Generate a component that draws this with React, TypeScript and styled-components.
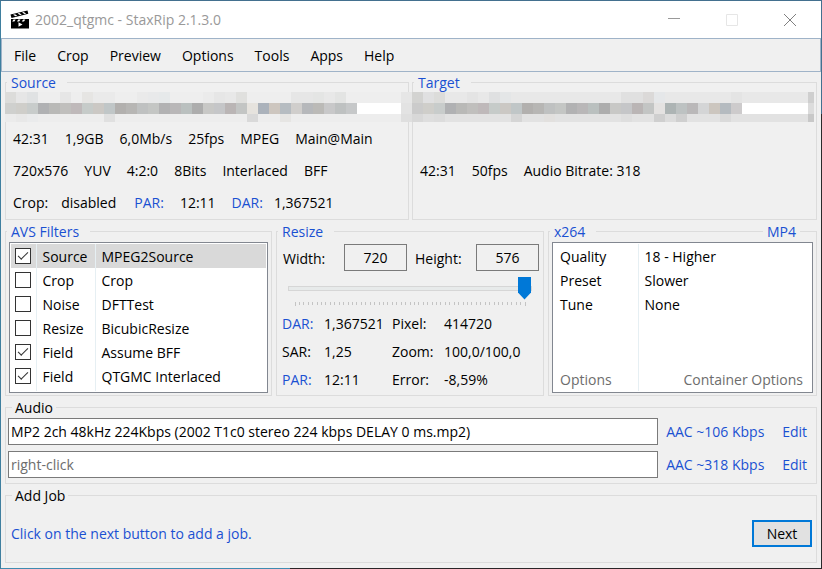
import React, { useState } from "react";
import styled, { createGlobalStyle, css } from "styled-components";

const surface = "#f0f0f0";
const blue = "#1a50d2";
const line = "#dcdcdc";

const GlobalStyle = createGlobalStyle`
  *, *::before, *::after { box-sizing: border-box; }
  body {
    margin: 0;
    background: ${surface};
    color: #000;
    font-family: "Open Sans", "Noto Sans", sans-serif;
    font-size: 14px;
    line-height: 20px;
  }
  button, input { font: inherit; color: inherit; }
`;

const Window = styled.div`
  min-height: 100vh;
  padding: 1px;
  display: flex;
  flex-direction: column;
  background:
    linear-gradient(#43708f, #43708f) top / 100% 1px no-repeat,
    linear-gradient(#3f7f9f, #3f7f9f) left / 1px 100% no-repeat,
    linear-gradient(#43708f 20%, #2a2a2c 20%) right / 1px 100% no-repeat,
    linear-gradient(90deg, #3f8bb0 290px, #2a2628 290px) bottom / 100% 1px no-repeat,
    ${surface};
`;

const TitleBar = styled.header`
  display: flex;
  align-items: center;
  height: 37px;
  padding: 0 2px 0 9px;
  background: #fff;
  color: #999;
`;

const AppIcon = styled.svg`
  width: 20px;
  height: 20px;
  margin-right: 5px;
  flex: none;
`;

const Title = styled.h1`
  margin: 0;
  flex: 1;
  font-size: 14px;
  font-weight: 400;
`;

const CaptionButton = styled.button`
  display: grid;
  place-items: center;
  width: 58px;
  height: 37px;
  padding: 0;
  border: 0;
  background: none;
`;

const MenuBar = styled.nav`
  display: flex;
  align-items: center;
  gap: 21px;
  height: 34px;
  padding: 2px 12px 0;
  border: 1px solid #9fb3c8;
`;

const MenuItem = styled.button`
  padding: 0;
  border: 0;
  background: none;
`;

const Main = styled.main`
  display: grid;
  gap: 1px;
  padding: 0 4px 5px;
`;

const Columns = styled.div<{ $template: string; $gap: number }>`
  display: grid;
  grid-template-columns: ${(p) => p.$template};
  column-gap: ${(p) => p.$gap}px;
`;

const Group = styled.fieldset`
  position: relative;
  min-width: 0;
  margin: 0;
  padding: 0;
  border: 1px solid ${line};
`;

const Legend = styled.legend<{ $link?: boolean }>`
  height: 20px;
  line-height: 22px;
  margin-left: ${(p) => (p.$link ? 1 : 6)}px;
  padding: ${(p) => (p.$link ? "0 11px 0 4px" : "0 3px")};
`;

const Link = styled.a`
  color: ${blue};
  text-decoration: none;
`;

const CornerLink = styled(Link)`
  position: absolute;
  top: -20px;
  right: 16px;
  height: 20px;
  padding: 0 4px;
  line-height: 22px;
  background: ${surface};
`;

const Mosaic = styled.svg`
  display: block;
  margin-left: -1px;
  height: 30px;
  overflow: visible;
`;

const InfoRows = styled.div`
  padding-top: 1px;
`;

const InfoRow = styled.div`
  display: flex;
  gap: 16px;
  min-height: 32px;
  padding-left: 7px;
  line-height: 32px;
  white-space: nowrap;
`;

const Pair = styled.span<{ $gap: number }>`
  display: flex;
  gap: ${(p) => p.$gap}px;
  margin-right: 2px;
`;

const ListBox = styled.div`
  display: flex;
  flex-direction: column;
  height: 151px;
  margin: 1px 3px 2px;
  padding: 1px;
  border: 1px solid #828790;
  background: #fff;
`;

const Table = styled.table`
  width: 100%;
  height: 100%;
  border-collapse: collapse;
  table-layout: fixed;
`;

const Row = styled.tr<{ $selected?: boolean }>`
  height: 24px;
  background: ${(p) => (p.$selected ? "#d9d9d9" : "transparent")};
`;

const Cell = styled.td<{ $width?: number; $divided?: boolean; $muted?: boolean; $end?: boolean }>`
  padding: 2px 6px 0;
  white-space: nowrap;
  ${(p) => p.$width && css`width: ${p.$width}px;`}
  ${(p) => p.$divided && css`border-right: 1px solid #e6eff3;`}
  ${(p) => p.$muted && css`color: #6d6d6d;`}
  ${(p) => p.$end && css`text-align: right; padding-right: 8px;`}
`;

const CheckCell = styled(Cell)`
  padding: 0 4px;
`;

const Check = styled.input`
  display: block;
  appearance: none;
  width: 16px;
  height: 16px;
  margin: 0;
  border: 1px solid #333;
  background: #fff;
  &:checked::after {
    content: "";
    display: block;
    width: 10px;
    height: 5px;
    margin: 3px 2px;
    border: solid #333;
    border-width: 0 0 1px 1px;
    transform: rotate(-45deg);
  }
`;

const SizeRow = styled.div`
  display: flex;
  align-items: center;
  padding: 3px 4px 0 6px;
`;

const SizeLabel = styled.label`
  flex: 1;
  padding-top: 2px;
`;

const SizeInput = styled.input`
  width: 63px;
  height: 27px;
  margin-right: 8px;
  padding: 0;
  border: 1px solid #7a7a7a;
  background: ${surface};
  text-align: center;
  &:last-child { margin-right: 0; }
`;

const SliderArea = styled.div`
  padding: 5px 11px 0;
`;

const Slider = styled.input`
  display: block;
  appearance: none;
  width: 100%;
  height: 24px;
  margin: 0;
  background: none;
  &::-webkit-slider-runnable-track {
    height: 5px;
    border: 1px solid #d6d6d6;
    background: #e7eaea;
  }
  &::-webkit-slider-thumb {
    appearance: none;
    width: 13px;
    height: 23px;
    margin-top: -10px;
    background: #0078d7;
    clip-path: polygon(0 0, 100% 0, 100% 70%, 50% 100%, 0 70%);
  }
`;

const Ticks = styled.svg`
  display: block;
  width: calc(100% - 14px);
  height: 4px;
  margin: 2px 7px 0;
  overflow: visible;
`;

const Stats = styled.dl`
  display: grid;
  grid-template-columns: 42px 68px 52px 1fr;
  margin: 4px 0 0;
  padding-left: 5px;
  line-height: 28px;
  white-space: nowrap;
  dt, dd { margin: 0; }
`;

const AudioGrid = styled.div`
  display: grid;
  grid-template-columns: 1fr 124px auto;
  align-items: center;
  row-gap: 6px;
  padding: 1px 9px 5px 2px;
`;

const AudioInput = styled.input`
  width: 100%;
  height: 27px;
  padding: 0 2px;
  border: 1px solid #7a7a7a;
  background: #fff;
  &::placeholder { color: #6d6d6d; opacity: 1; }
`;

const ProfileLink = styled(Link)`
  margin-left: 8px;
`;

const JobRow = styled.div`
  display: flex;
  align-items: center;
  justify-content: space-between;
  padding: 15px 4px 15px 5px;
`;

const NextButton = styled.button`
  width: 60px;
  height: 27px;
  padding: 0;
  border: 2px solid #0078d7;
  background: #e1e1e1;
`;

const pathShades =
  "cfceca c8cccb b0b1b3 b9b9b7 c0bfbd bfb9ba c6cbc9 cbc8c4 c0c6c7 b2b0ae b7b6b4 bfc1c1 c4c6c4 b2b2b3 b9b7b8 bac0bf adadad c8c8c6 c5c6c8 bab5b5 c3c5c4";

type MosaicData = {
  top: Record<number, string>;
  bottom: Record<number, string>;
  middle: string;
  topBase: string;
  bottomBase: string;
  end: [string, string, string];
  endWidth: number;
};

const sourceMosaic: MosaicData = {
  topBase: "eeeeee",
  bottomBase: "ededed",
  top: { 0: "dcdcda", 1: "e6e6e6", 2: "e0e2e3", 5: "e6e6e6", 7: "e6e5e3", 8: "eaeaea", 9: "eaeaea", 12: "eaeaea", 13: "e8e9ea", 14: "e6e9ea", 18: "ebebeb", 19: "e6e6e6", 20: "e8e8e8", 21: "e0e0de", 26: "e6e6e6", 27: "e6e6e6", 28: "e4e5e4", 29: "e8e8e8", 30: "e3e4e3" },
  bottom: { 0: "ebebeb", 1: "e8e8e8", 2: "eaebec", 9: "e0e0e0", 22: "d9d9d9", 25: "e6e5e3" },
  middle: `cfd0ce ${pathShades} e6e3de abb2bb cdc6bf b6bcc1 d0cecc b6b8bb bbbab7 c8c8c9 bec1c1 c6c8c9`,
  end: ["e6e6e6", "e3e3e3", "dfdfdf"],
  endWidth: 11,
};

const targetMosaic: MosaicData = {
  topBase: "e8e8e8",
  bottomBase: "e2e2e2",
  top: { 0: "d3d3d1", 1: "e0e0e1", 2: "dcdcda", 5: "e4e4e4", 7: "dfe0e1", 8: "e4e6e7", 19: "e0e0e0", 20: "e0e0e0", 21: "dbd9d8", 22: "e5e7e9", 29: "e4e4e4" },
  bottom: { 0: "d8d8d8", 1: "dedede", 2: "dcdcdc", 9: "d5d5d5", 12: "e2e0de", 19: "dedede", 22: "cfcfcf", 23: "dcdcdc", 24: "cfcfcf", 28: "dadada" },
  middle: `cbcbcb ${pathShades} e4e2e1 adb4b4 bdc2c2 bab8b9 d4d5d6 ccc6bf b5bbc0 cdcbcc`,
  end: ["cfcfcf", "dcdcdc", "c8c8c8"],
  endWidth: 6,
};

function PathMosaic({ data }: { data: MosaicData }) {
  const middle = data.middle.split(" ");
  const width = 396 + data.endWidth;
  return (
    <Mosaic width={width} viewBox={`0 0 ${width} 30`} shapeRendering="crispEdges" aria-hidden="true">
      <rect width="396" height="11" fill={`#${data.topBase}`} />
      <rect y="11" width="396" height="11" fill="#fff" />
      <rect y="22" width="396" height="8" fill={`#${data.bottomBase}`} />
      {Object.entries(data.top).map(([i, c]) => <rect key={`t${i}`} x={Number(i) * 11} width="11" height="11" fill={`#${c}`} />)}
      {middle.map((c, i) => <rect key={i} x={i * 11} y="11" width="11" height="11" fill={`#${c}`} />)}
      {Object.entries(data.bottom).map(([i, c]) => <rect key={`b${i}`} x={Number(i) * 11} y="22" width="11" height="8" fill={`#${c}`} />)}
      <rect x="396" width={data.endWidth} height="11" fill={`#${data.end[0]}`} />
      <rect x="396" y="11" width={data.endWidth} height="11" fill={`#${data.end[1]}`} />
      <rect x="396" y="22" width={data.endWidth} height="8" fill={`#${data.end[2]}`} />
    </Mosaic>
  );
}

const initialFilters = [
  { on: true, kind: "Source", name: "MPEG2Source" },
  { on: false, kind: "Crop", name: "Crop" },
  { on: false, kind: "Noise", name: "DFTTest" },
  { on: false, kind: "Resize", name: "BicubicResize" },
  { on: true, kind: "Field", name: "Assume BFF" },
  { on: true, kind: "Field", name: "QTGMC Interlaced" },
];

const encoder = [["Quality", "18 - Higher"], ["Preset", "Slower"], ["Tune", "None"]];
const menus = ["File", "Crop", "Preview", "Options", "Tools", "Apps", "Help"];
const tickCount = 52;

export default function App() {
  const [filters, setFilters] = useState(initialFilters);
  const toggle = (index: number) =>
    setFilters(filters.map((f, i) => (i === index ? { ...f, on: !f.on } : f)));

  return (
    <>
      <GlobalStyle />
      <Window>
        <TitleBar>
          <AppIcon viewBox="0 0 20 20" aria-hidden="true">
            <path d="M1 9h18v9.500H1z" fill="#000" />
            <path d="M.5 4.500 17.500.500l.8 3.200L1.500 8z" fill="#000" />
            <path d="m3 4.800 2.500 1.500 1.800-.5L5 4.300zm4.500-1.200L10 5.100l1.800-.4-2.500-1.600zM12 2.500l2.500 1.600 1.700-.4-2.400-1.600zM3.500 9.500h2.200L4.400 11.500H2.200zm4.800 0h2.200l-1.300 2H7zm4.800 0h2.200l-1.300 2h-2.200z" fill="#fff" />
            <path d="m8.500 12.300 4 2.200-4 2.300z" fill="#fff" />
          </AppIcon>
          <Title>2002_qtgmc - StaxRip 2.1.3.0</Title>
          <CaptionButton aria-label="Minimize">
            <svg width="12" height="12" stroke="#999"><path d="M0 4.500h12" /></svg>
          </CaptionButton>
          <CaptionButton aria-label="Maximize" disabled>
            <svg width="12" height="12" stroke="#e6e6e6" fill="none"><path d="M.5.5h11v11H.5z" /></svg>
          </CaptionButton>
          <CaptionButton aria-label="Close">
            <svg width="12" height="12" stroke="#808080"><path d="m0 0 12 12M12 0 0 12" /></svg>
          </CaptionButton>
        </TitleBar>
        <MenuBar>
          {menus.map((m) => <MenuItem key={m}>{m}</MenuItem>)}
        </MenuBar>
        <Main>
          <Columns $template="minmax(0, 404fr) minmax(0, 405fr)" $gap={3}>
            <Group>
              <Legend $link><Link href="#source">Source</Link></Legend>
              <PathMosaic data={sourceMosaic} />
              <InfoRows>
                <InfoRow>
                  {["42:31", "1,9GB", "6,0Mb/s", "25fps", "MPEG", "Main@Main"].map((t) => <span key={t}>{t}</span>)}
                </InfoRow>
                <InfoRow>
                  {["720x576", "YUV", "4:2:0", "8Bits", "Interlaced", "BFF"].map((t) => <span key={t}>{t}</span>)}
                </InfoRow>
                <InfoRow>
                  <Pair $gap={13}><span>Crop:</span><span>disabled</span></Pair>
                  <Link href="#par">PAR:</Link>
                  <span>12:11</span>
                  <Pair $gap={11}><Link href="#dar">DAR:</Link><span>1,367521</span></Pair>
                </InfoRow>
              </InfoRows>
            </Group>
            <Group>
              <Legend $link><Link href="#target">Target</Link></Legend>
              <PathMosaic data={targetMosaic} />
              <InfoRows>
                <InfoRow />
                <InfoRow>
                  <span>42:31</span><span>50fps</span><span>Audio Bitrate: 318</span>
                </InfoRow>
              </InfoRows>
            </Group>
          </Columns>

          <Columns $template="minmax(0, 267fr) minmax(0, 268fr) minmax(0, 269fr)" $gap={4}>
            <Group>
              <Legend $link><Link href="#filters">AVS Filters</Link></Legend>
              <ListBox>
                <Table>
                  <tbody>
                    {filters.map((f, i) => (
                      <Row key={i} $selected={i === 0}>
                        <CheckCell $width={25} $divided>
                          <Check type="checkbox" checked={f.on} onChange={() => toggle(i)} aria-label={f.name} />
                        </CheckCell>
                        <Cell $width={59} $divided>{f.kind}</Cell>
                        <Cell>{f.name}</Cell>
                      </Row>
                    ))}
                    <tr><Cell $divided /><Cell $divided /><Cell /></tr>
                  </tbody>
                </Table>
              </ListBox>
            </Group>

            <Group>
              <Legend $link><Link href="#resize">Resize</Link></Legend>
              <SizeRow>
                <SizeLabel htmlFor="width">Width:</SizeLabel>
                <SizeInput id="width" defaultValue="720" />
                <SizeLabel htmlFor="height">Height:</SizeLabel>
                <SizeInput id="height" defaultValue="576" />
              </SizeRow>
              <SliderArea>
                <Slider type="range" min={0} max={tickCount} defaultValue={tickCount} aria-label="Resize" />
                <Ticks stroke="#c4c4c4" shapeRendering="crispEdges" aria-hidden="true">
                  {Array.from({ length: tickCount + 1 }, (_, i) => (
                    <line key={i} x1={`${(i * 100) / tickCount}%`} x2={`${(i * 100) / tickCount}%`} y1="0" y2={i % tickCount ? 3 : 4} />
                  ))}
                </Ticks>
              </SliderArea>
              <Stats>
                <dt><Link href="#dar">DAR:</Link></dt><dd>1,367521</dd>
                <dt>Pixel:</dt><dd>414720</dd>
                <dt>SAR:</dt><dd>1,25</dd>
                <dt>Zoom:</dt><dd>100,0/100,0</dd>
                <dt><Link href="#par">PAR:</Link></dt><dd>12:11</dd>
                <dt>Error:</dt><dd>-8,59%</dd>
              </Stats>
            </Group>

            <Group>
              <Legend $link><Link href="#x264">x264</Link></Legend>
              <CornerLink href="#mp4">MP4</CornerLink>
              <ListBox>
                <Table>
                  <tbody>
                    {encoder.map(([k, v]) => (
                      <Row key={k}><Cell $width={84} $divided>{k}</Cell><Cell>{v}</Cell></Row>
                    ))}
                    <tr><Cell $divided /><Cell /></tr>
                    <Row><Cell $divided $muted>Options</Cell><Cell $muted $end>Container Options</Cell></Row>
                  </tbody>
                </Table>
              </ListBox>
            </Group>
          </Columns>

          <Group>
            <Legend>Audio</Legend>
            <AudioGrid>
              <AudioInput aria-label="Audio track 1" defaultValue="MP2 2ch 48kHz 224Kbps (2002 T1c0 stereo 224 kbps DELAY 0 ms.mp2)" />
              <ProfileLink href="#profile1">AAC ~106 Kbps</ProfileLink>
              <Link href="#edit1">Edit</Link>
              <AudioInput aria-label="Audio track 2" placeholder="right-click" />
              <ProfileLink href="#profile2">AAC ~318 Kbps</ProfileLink>
              <Link href="#edit2">Edit</Link>
            </AudioGrid>
          </Group>

          <Group>
            <Legend>Add Job</Legend>
            <JobRow>
              <Link href="#job">Click on the next button to add a job.</Link>
              <NextButton>Next</NextButton>
            </JobRow>
          </Group>
        </Main>
      </Window>
    </>
  );
}
